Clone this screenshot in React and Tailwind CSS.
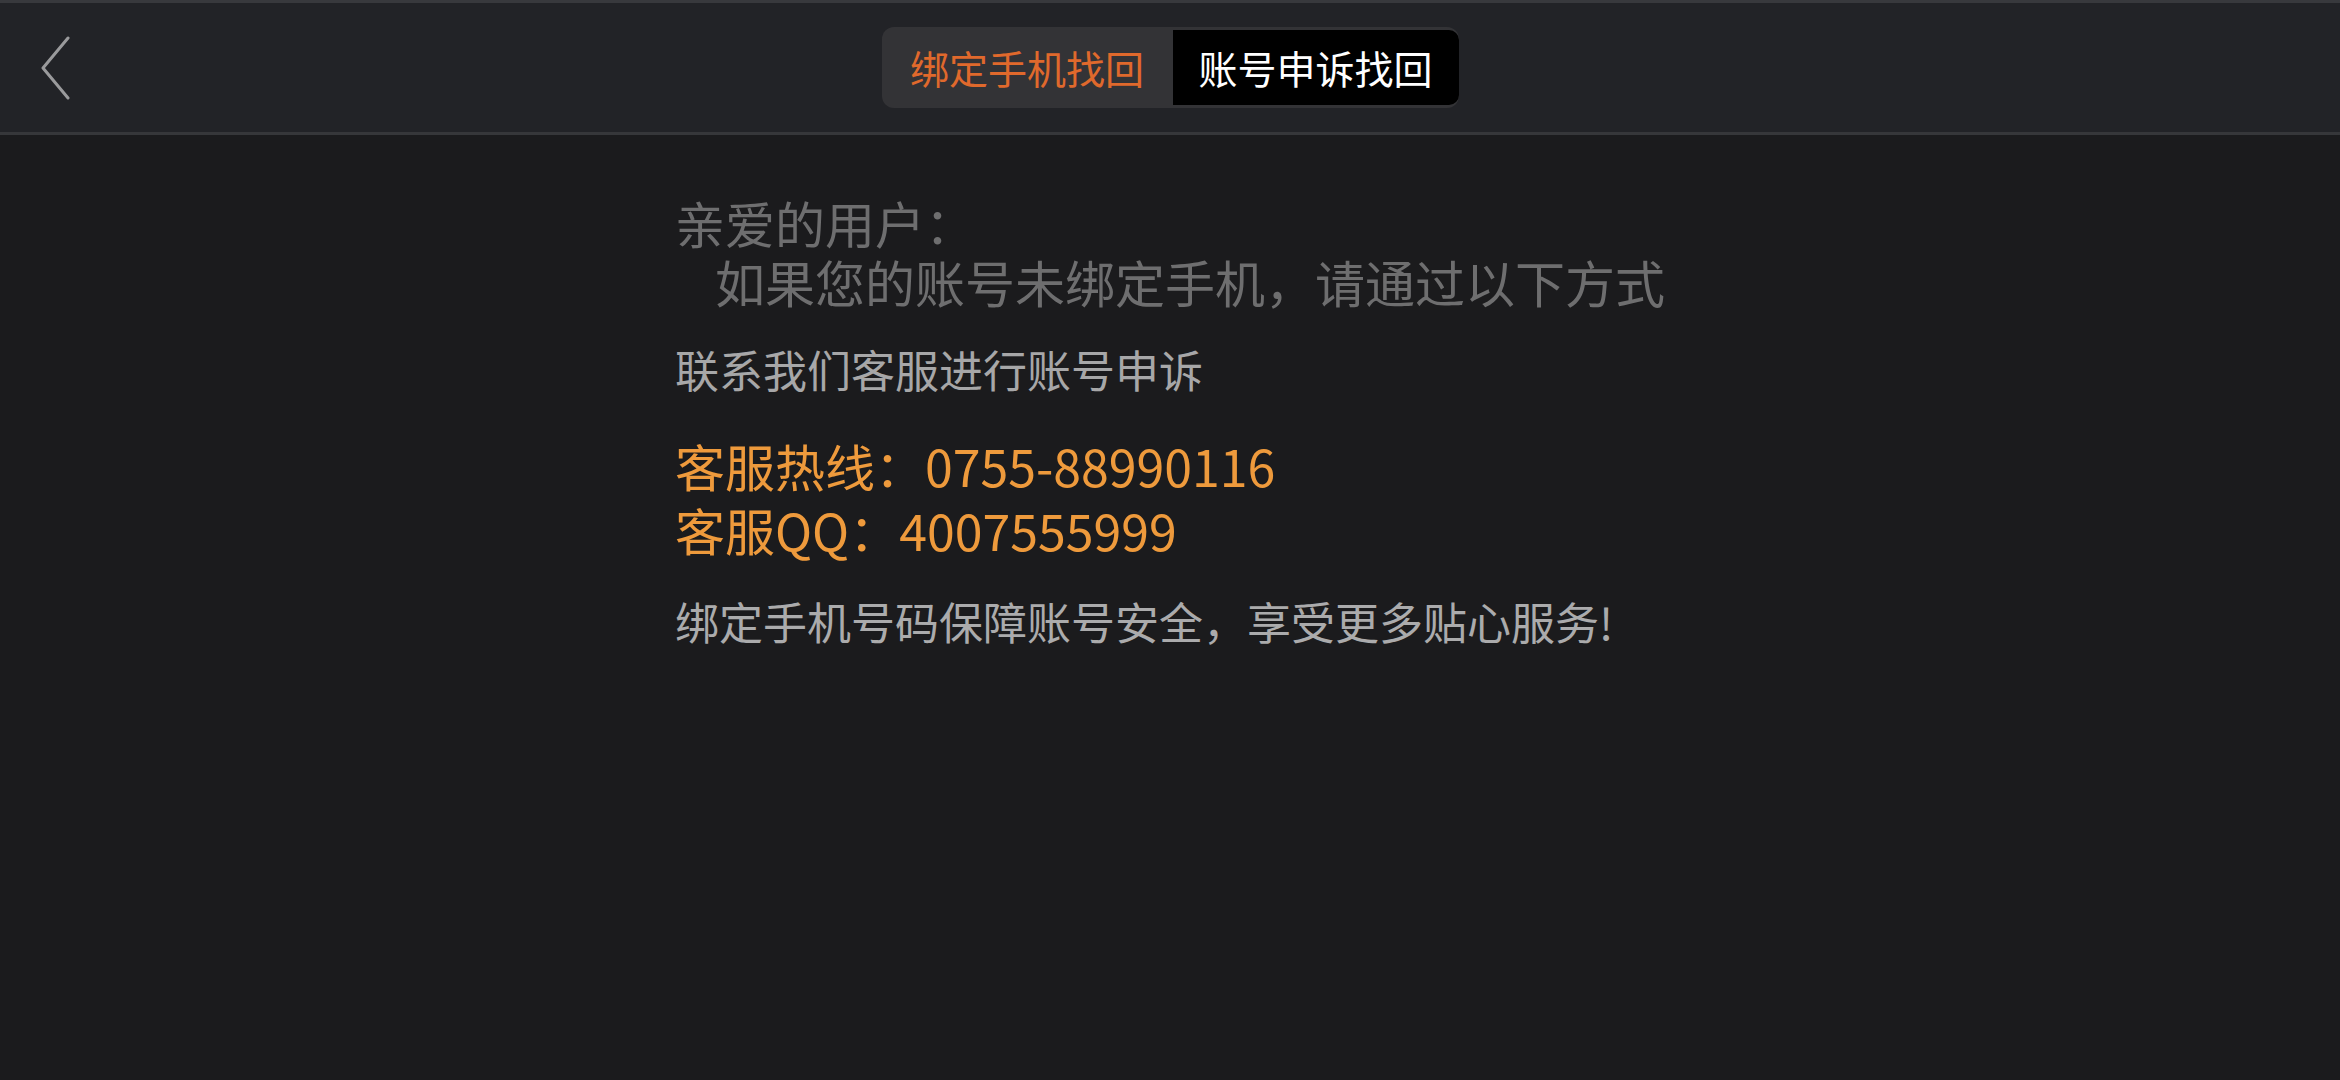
export default function App() {
  return (
    <div
      className="flex h-screen w-full flex-col bg-[#1b1b1d]"
      style={{ fontFamily: '"Noto Sans CJK SC", "Noto Sans", sans-serif' }}
    >
      {/* Top bar */}
      <header className="grid h-[135px] shrink-0 grid-cols-[1fr_auto_1fr] items-center border-t-[3px] border-b-[3px] border-t-[#38393d] border-b-[#36373a] bg-[#222327]">
        <div className="flex items-center pl-[40px]">
          <svg width="31" height="64" viewBox="0 0 31 64" fill="none">
            <path d="M28 2 L3 32 L28 62" stroke="#9a9a9c" strokeWidth="3" strokeLinecap="round" strokeLinejoin="round" />
          </svg>
        </div>
        <div className="flex h-[81px] items-center rounded-[12px] bg-[#333336] py-[3px]">
          <div className="flex h-full w-[291px] items-center justify-center text-[39px] text-[#e0692c]">
            绑定手机找回
          </div>
          <div className="flex h-full w-[286px] items-center justify-center rounded-r-[10px] bg-black text-[39px] text-white">
            账号申诉找回
          </div>
        </div>
        <div />
      </header>

      {/* Content */}
      <main className="mx-auto w-[990px] pt-[58px]">
        <div className="text-[50px] leading-[58px] text-[#6e6e6f]">
          <p>亲爱的用户：</p>
          <p className="mt-[1px] pl-[40px]">如果您的账号未绑定手机，请通过以下方式</p>
        </div>
        <p className="mt-[33px] text-[44px] leading-[52px] text-[#a7a7a8]">联系我们客服进行账号申诉</p>
        <div className="mt-[38px] text-[50px] leading-[64px] text-[#ee9a3c]">
          <p>客服热线：0755-88990116</p>
          <p>客服QQ：4007555999</p>
        </div>
        <p className="mt-[34px] text-[44px] leading-[52px] text-[#ababac]">
          绑定手机号码保障账号安全，享受更多贴心服务!
        </p>
      </main>
    </div>
  );
}
